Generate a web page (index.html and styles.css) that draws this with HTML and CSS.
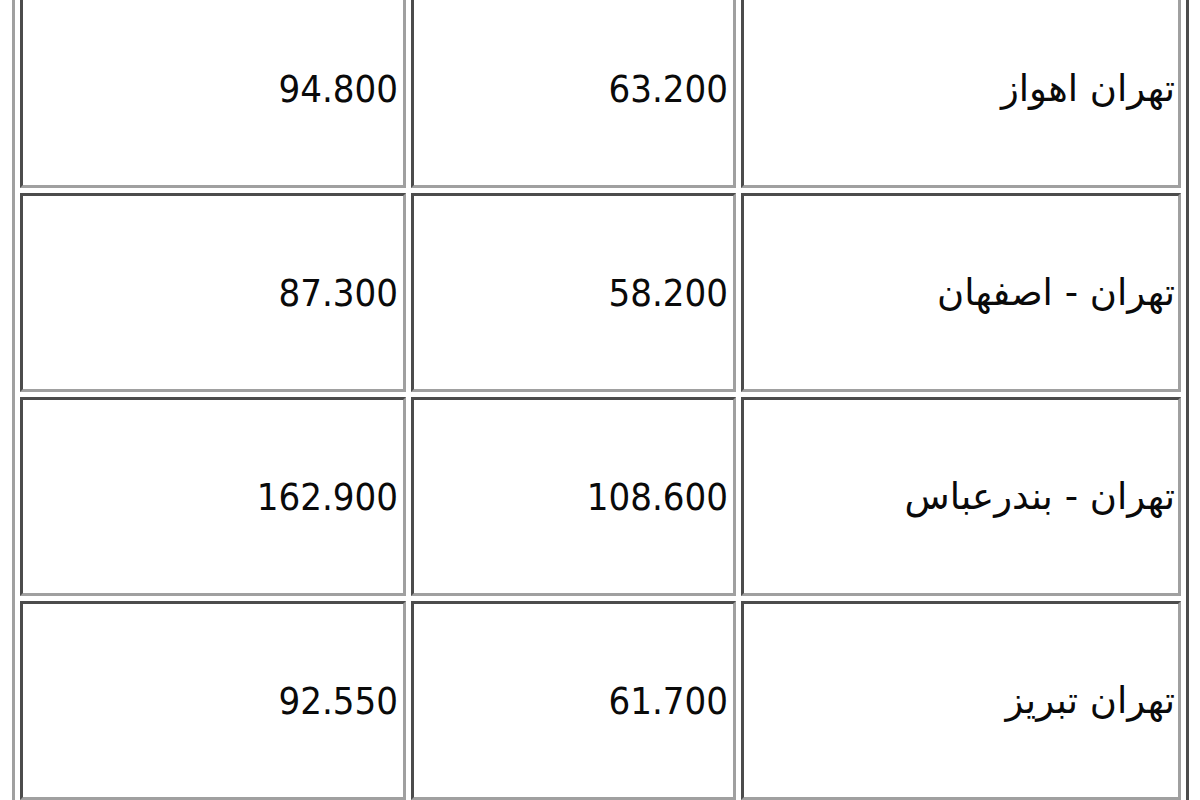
FILE: index.html
```html
<!DOCTYPE html>
<html lang="fa">
<head>
<meta charset="utf-8">
<title>جدول قیمت</title>
<link rel="stylesheet" href="styles.css">
</head>
<body>
<table class="grid" dir="rtl">
  <colgroup>
    <col class="c-route">
    <col class="c-mid">
    <col class="c-left">
  </colgroup>
  <tbody>
    <tr>
      <td class="route">تهران اهواز</td>
      <td class="num">63.200</td>
      <td class="num">94.800</td>
    </tr>
    <tr>
      <td class="route">تهران - اصفهان</td>
      <td class="num">58.200</td>
      <td class="num">87.300</td>
    </tr>
    <tr>
      <td class="route">تهران - بندرعباس</td>
      <td class="num">108.600</td>
      <td class="num">162.900</td>
    </tr>
    <tr>
      <td class="route">تهران تبریز</td>
      <td class="num">61.700</td>
      <td class="num">92.550</td>
    </tr>
  </tbody>
</table>
</body>
</html>
```

FILE: styles.css
```css
html, body {
  margin: 0;
  padding: 0;
  background: #ffffff;
  overflow: hidden;
}

body {
  width: 1200px;
  height: 800px;
}

.grid {
  margin: -19px 0 0 12px;
  border: 3px outset #a0a0a0;
  border-collapse: separate;
  border-spacing: 5px;
  table-layout: fixed;
  width: 1177px;
}

.c-route { width: 440px; }
.c-mid { width: 325px; }
.c-left { width: 386px; }

.grid tr {
  height: 199px;
}

.grid td {
  border: 3px inset #a0a0a0;
  text-align: right;
  vertical-align: middle;
  color: #0a0a0a;
  box-sizing: border-box;
}

.num {
  font-family: "DejaVu Sans Condensed", "Liberation Sans", sans-serif;
  font-size: 38px;
  padding: 0 5px;
}

.route {
  font-family: "DejaVu Sans", "Noto Sans", sans-serif;
  font-size: 37px;
  padding: 0 3px;
}
```
